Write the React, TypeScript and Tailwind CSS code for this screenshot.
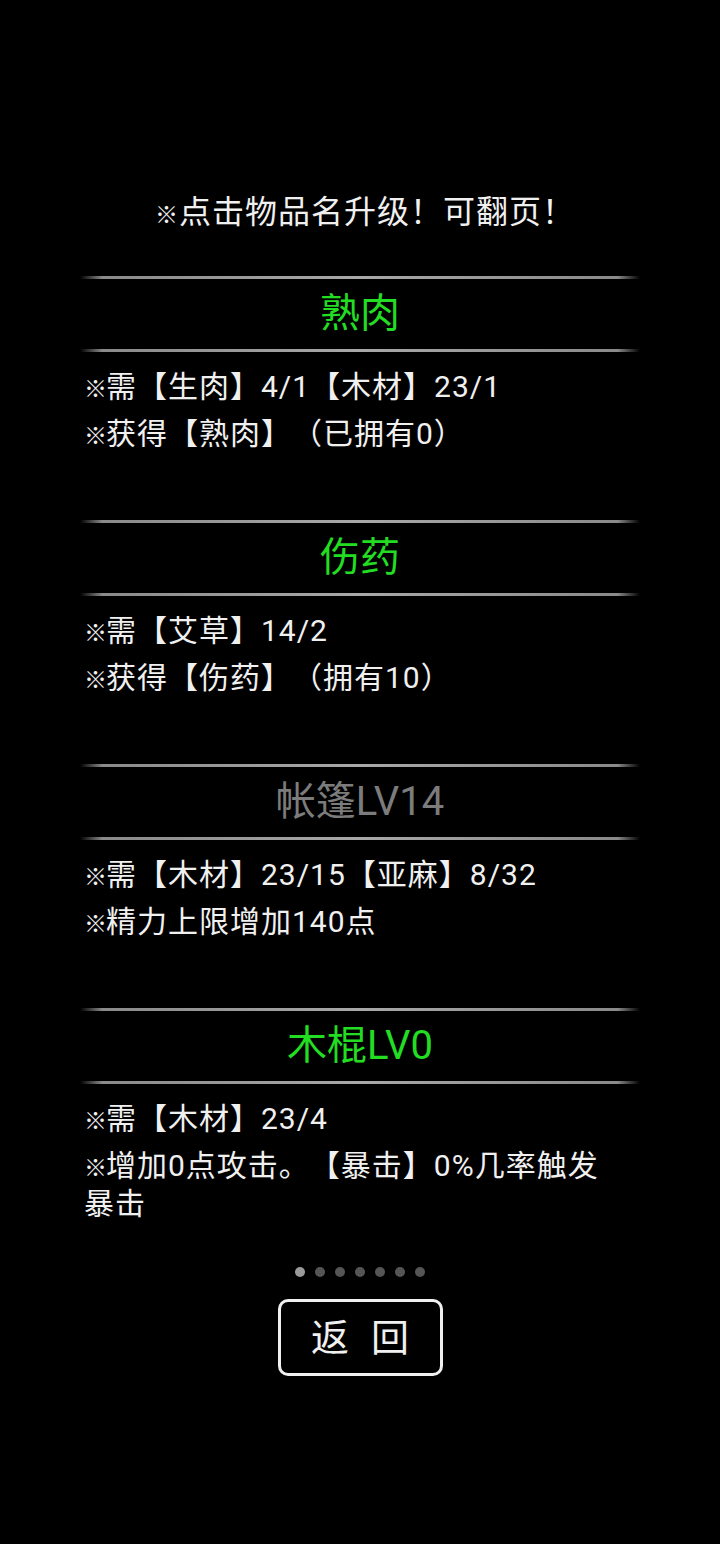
import React from 'react';

interface Item {
    title: string;
    color: string;
    lines: string[];
}

const items: Item[] = [
    {
        title: '熟肉',
        color: 'text-[#22dd22]',
        lines: ['需【生肉】4/1【木材】23/1', '获得【熟肉】（已拥有0）'],
    },
    {
        title: '伤药',
        color: 'text-[#22dd22]',
        lines: ['需【艾草】14/2', '获得【伤药】（拥有10）'],
    },
    {
        title: '帐篷LV14',
        color: 'text-[#7c7c7c]',
        lines: ['需【木材】23/15【亚麻】8/32', '精力上限增加140点'],
    },
    {
        title: '木棍LV0',
        color: 'text-[#22dd22]',
        lines: ['需【木材】23/4', '增加0点攻击。【暴击】0%几率触发暴击'],
    },
];

// the reference mark is drawn a bit smaller than the text round it
const Mark: React.FC = () => (
    <span className="text-[23px] leading-none font-bold tracking-[-1px]">※</span>
);

const Divider: React.FC = () => (
    <div className="h-[3px] w-[560px] bg-[linear-gradient(to_right,transparent,#8a8a8a_4%,#a8a8a8_50%,#8a8a8a_96%,transparent)]" />
);

const ItemBlock: React.FC<{ item: Item; last?: boolean }> = ({ item, last }) => (
    <div className={`flex flex-col items-center ${last ? '' : 'h-[244px]'}`}>
        <Divider />
        <div className={`h-[70px] flex items-center justify-center text-[40px] leading-none ${item.color}`}>
            {item.title}
        </div>
        <Divider />
        <div className="w-[560px] pl-[4px] pt-[16px] flex flex-col gap-[9px] text-[30px] leading-[38px] tracking-[1px] text-[#f0f0f0]">
            {item.lines.map((line, i) => (
                <p key={i} className="w-[536px]">
                    <Mark />
                    {line}
                </p>
            ))}
        </div>
    </div>
);

const App: React.FC = () => {
    return (
        <div
            className="min-h-[1544px] w-full bg-black flex flex-col items-center [text-spacing-trim:space-all]"
            style={{ fontFamily: "Roboto, 'Noto Sans CJK SC', sans-serif" }}
        >
            {/* Hint */}
            <p className="mt-[192px] h-[40px] leading-[40px] text-[32px] tracking-[1px] text-[#f0f0f0] pl-[10px]">
                <span className="text-[23px] leading-none font-bold">※</span>
                点击物品名升级！可翻页！
            </p>

            {/* Items */}
            <div className="mt-[44px] flex flex-col">
                {items.map((item, i) => (
                    <ItemBlock key={i} item={item} last={i === items.length - 1} />
                ))}
            </div>

            {/* Page dots */}
            <div className="mt-[44px] flex gap-[10px]">
                {Array.from({ length: 7 }).map((_, i) => (
                    <div
                        key={i}
                        className={`w-[10px] h-[10px] rounded-full ${i === 0 ? 'bg-[#9a9a9a]' : 'bg-[#555555]'}`}
                    />
                ))}
            </div>

            {/* Back button */}
            <button className="mt-[22px] w-[165px] h-[77px] border-[3px] border-[#f0f0f0] rounded-[10px] flex items-center justify-center gap-[22px] text-[38px] leading-none text-[#f0f0f0]">
                <span>返</span>
                <span>回</span>
            </button>
        </div>
    );
};

export default App;
